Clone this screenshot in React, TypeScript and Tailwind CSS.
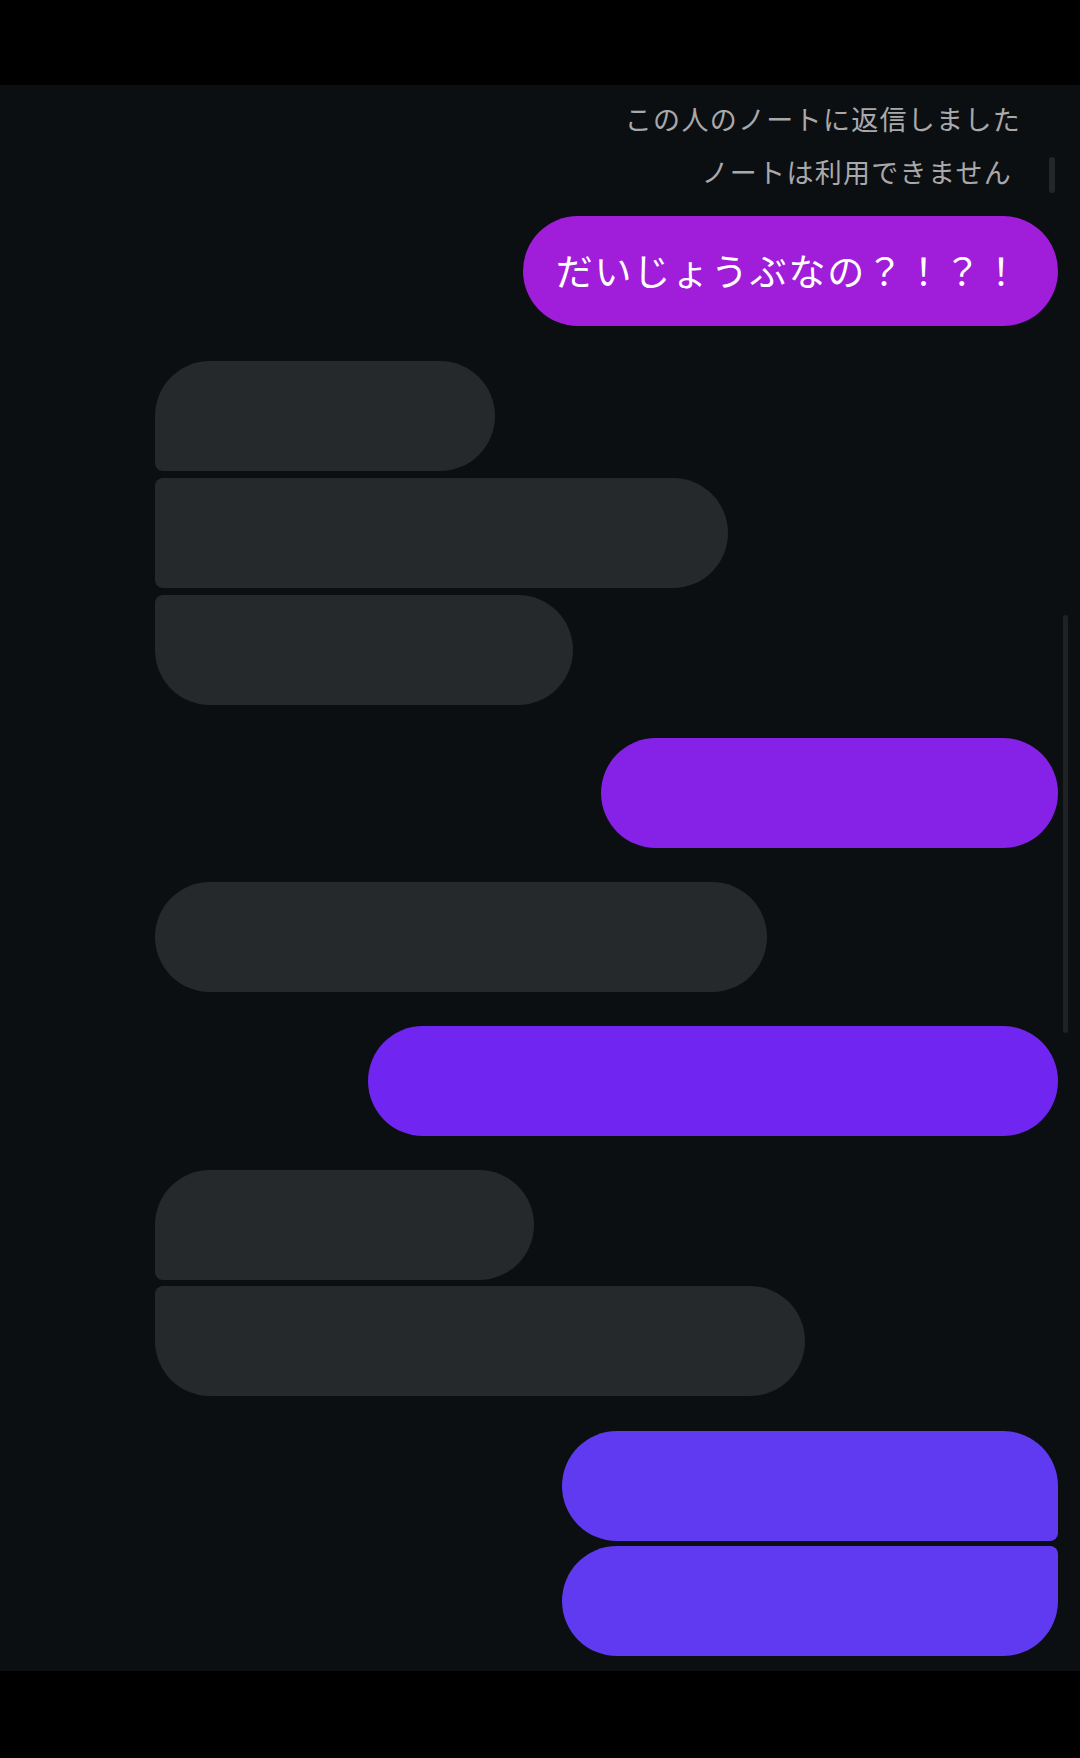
import React from "react";

const jp = { fontFamily: '"Noto Sans CJK JP", "Noto Sans", sans-serif' };

export default function App() {
  return (
    <div className="w-[1080px] h-[1758px] bg-black flex flex-col" style={jp}>
      <div className="h-[85px] bg-black shrink-0" />
      <div className="relative h-[1586px] bg-[#0c0f12] flex flex-col">
        {/* scroll indicators */}
        <div className="absolute left-[1049px] top-[72px] w-[6px] h-[36px] rounded-full bg-[#23272a]" />
        <div className="absolute left-[1063px] top-[530px] w-[5px] h-[418px] rounded-full bg-[#1e2225]" />

        <div className="flex flex-col items-end pt-[14px] pr-[59px] text-[#a9a9ab] text-[27px] leading-[40px] tracking-[1.3px]">
          <div>この人のノートに返信しました</div>
          <div className="pr-[9px] mt-[13px]">ノートは利用できません</div>
        </div>

        <div className="flex flex-col pl-[155px] pr-[22px] mt-[24px]">
          <div className="self-end w-[535px] h-[110px] rounded-full bg-[#a01dd9] flex items-center justify-center pr-[4px] text-white text-[37px] tracking-[1.8px]">
            だいじょうぶなの？！？！
          </div>

          <div className="flex flex-col gap-[7px] mt-[35px]">
            <div className="w-[340px] h-[110px] bg-[#25292c] rounded-tl-[55px] rounded-bl-[8px] rounded-r-[55px]" />
            <div className="w-[573px] h-[110px] bg-[#25292c] rounded-l-[8px] rounded-r-[55px]" />
            <div className="w-[418px] h-[110px] bg-[#25292c] rounded-tl-[8px] rounded-bl-[55px] rounded-r-[55px]" />
          </div>

          <div className="self-end w-[457px] h-[110px] rounded-full bg-[#8622e8] mt-[33px]" />

          <div className="w-[612px] h-[110px] rounded-full bg-[#25292c] mt-[34px]" />

          <div className="self-end w-[690px] h-[110px] rounded-full bg-[#7026f0] mt-[34px]" />

          <div className="flex flex-col gap-[6px] mt-[34px]">
            <div className="w-[379px] h-[110px] bg-[#25292c] rounded-tl-[55px] rounded-bl-[8px] rounded-r-[55px]" />
            <div className="w-[650px] h-[110px] bg-[#25292c] rounded-tl-[8px] rounded-bl-[55px] rounded-r-[55px]" />
          </div>

          <div className="self-end flex flex-col gap-[5px] mt-[35px]">
            <div className="w-[496px] h-[110px] bg-[#603af1] rounded-l-[55px] rounded-tr-[55px] rounded-br-[8px]" />
            <div className="w-[496px] h-[110px] bg-[#603af1] rounded-l-[55px] rounded-tr-[8px] rounded-br-[55px]" />
          </div>
        </div>
      </div>
      <div className="flex-1 bg-black" />
    </div>
  );
}
